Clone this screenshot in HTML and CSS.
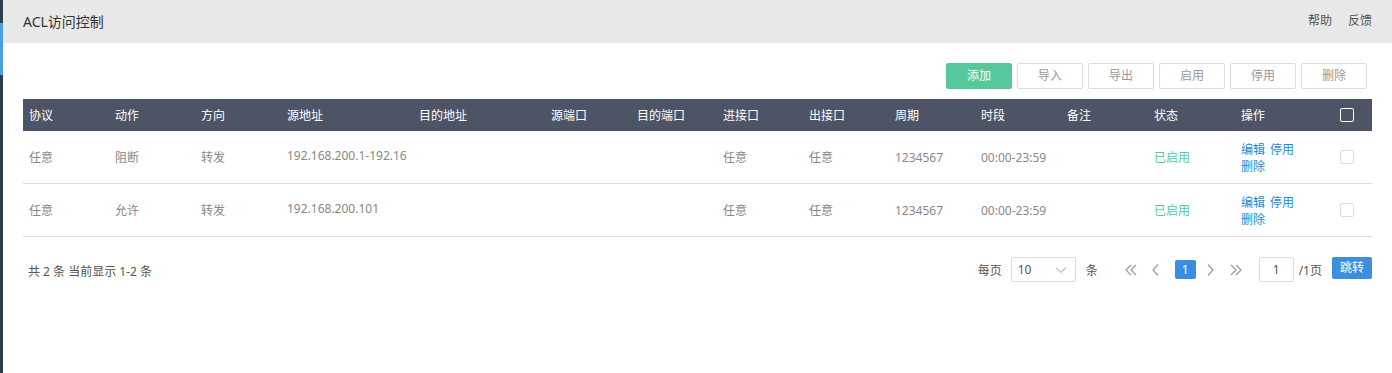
FILE: index.html
```html
<!DOCTYPE html>
<html lang="zh-CN">
<head>
  <meta charset="UTF-8" />
  <title>ACL访问控制</title>
  <link rel="stylesheet" href="styles.css">
</head>
<body>
  <div class="layout">
    <div class="side-strip"><div class="side-mark"></div></div>
    <div class="main">
      <div class="top-bar">
        <div class="page-title">ACL访问控制</div>
        <div class="top-links">
          <span>帮助</span>
          <span>反馈</span>
        </div>
      </div>

      <div class="content">
        <div class="toolbar">
          <div class="btn btn-green">添加</div>
          <div class="btn">导入</div>
          <div class="btn">导出</div>
          <div class="btn">启用</div>
          <div class="btn">停用</div>
          <div class="btn">删除</div>
        </div>

        <div class="acl-table">
          <div class="acl-row acl-head">
            <div class="cell">协议</div>
            <div class="cell">动作</div>
            <div class="cell">方向</div>
            <div class="cell">源地址</div>
            <div class="cell">目的地址</div>
            <div class="cell">源端口</div>
            <div class="cell">目的端口</div>
            <div class="cell">进接口</div>
            <div class="cell">出接口</div>
            <div class="cell">周期</div>
            <div class="cell">时段</div>
            <div class="cell">备注</div>
            <div class="cell">状态</div>
            <div class="cell">操作</div>
            <div class="cell cell-check"><span class="check check-head"></span></div>
          </div>

          <div class="acl-row">
            <div class="cell">任意</div>
            <div class="cell">阻断</div>
            <div class="cell">转发</div>
            <div class="cell cell-ip"><span class="ip-text">192.168.200.1-192.168.200.100</span></div>
            <div class="cell"></div>
            <div class="cell"></div>
            <div class="cell"></div>
            <div class="cell">任意</div>
            <div class="cell">任意</div>
            <div class="cell">1234567</div>
            <div class="cell">00:00-23:59</div>
            <div class="cell"></div>
            <div class="cell status-on">已启用</div>
            <div class="cell cell-ops"><a>编辑</a><a>停用</a><a>删除</a></div>
            <div class="cell cell-check"><span class="check"></span></div>
          </div>

          <div class="acl-row">
            <div class="cell">任意</div>
            <div class="cell">允许</div>
            <div class="cell">转发</div>
            <div class="cell cell-ip"><span class="ip-text">192.168.200.101</span></div>
            <div class="cell"></div>
            <div class="cell"></div>
            <div class="cell"></div>
            <div class="cell">任意</div>
            <div class="cell">任意</div>
            <div class="cell">1234567</div>
            <div class="cell">00:00-23:59</div>
            <div class="cell"></div>
            <div class="cell status-on">已启用</div>
            <div class="cell cell-ops"><a>编辑</a><a>停用</a><a>删除</a></div>
            <div class="cell cell-check"><span class="check"></span></div>
          </div>
        </div>

        <div class="footer">
          <div class="summary">共 2 条 当前显示 1-2 条</div>
          <div class="pager">
            <span class="pager-label">每页</span>
            <div class="page-size">
              <span>10</span>
              <svg width="12" height="8" viewBox="0 0 12 8"><polyline points="1,1.5 6,6.5 11,1.5" fill="none" stroke="#999" stroke-width="1"/></svg>
            </div>
            <span class="pager-label">条</span>
            <div class="pager-nav">
              <svg class="nav-icon nav-first" width="14" height="14" viewBox="0 0 14 14"><polyline points="7,2 2,7 7,12" fill="none" stroke="#999" stroke-width="1.2"/><polyline points="12,2 7,7 12,12" fill="none" stroke="#999" stroke-width="1.2"/></svg>
              <svg class="nav-icon nav-prev" width="14" height="14" viewBox="0 0 14 14"><polyline points="9,1.5 4,7 9,12.5" fill="none" stroke="#999" stroke-width="1.2"/></svg>
              <span class="page-num">1</span>
              <svg class="nav-icon nav-next" width="14" height="14" viewBox="0 0 14 14"><polyline points="5,1.5 10,7 5,12.5" fill="none" stroke="#999" stroke-width="1.2"/></svg>
              <svg class="nav-icon nav-last" width="14" height="14" viewBox="0 0 14 14"><polyline points="2,2 7,7 2,12" fill="none" stroke="#999" stroke-width="1.2"/><polyline points="7,2 12,7 7,12" fill="none" stroke="#999" stroke-width="1.2"/></svg>
            </div>
            <div class="page-input">1</div>
            <span class="pager-label">/1页</span>
            <div class="jump-btn">跳转</div>
          </div>
        </div>
      </div>
    </div>
  </div>
</body>
</html>
```

FILE: styles.css
```css
* { box-sizing: border-box; }
body {
  margin: 0;
  font-family: "Noto Sans", "Noto Sans CJK SC", sans-serif;
  font-size: 12px;
  color: #555;
  background: #fff;
}
.layout {
  display: flex;
  height: 373px;
}
.side-strip {
  width: 3px;
  background: #2f3e4e;
}
.side-mark {
  margin-top: 23px;
  height: 52px;
  background: #4a9fe0;
}
.main {
  flex: 1;
  display: flex;
  flex-direction: column;
}

.top-bar {
  height: 43px;
  background: #e8e8e8;
  display: flex;
  justify-content: space-between;
  align-items: center;
  padding: 0 20px;
}
.page-title {
  font-size: 14px;
  color: #333;
  padding-bottom: 2px;
}
.top-links {
  display: flex;
  gap: 16px;
  color: #555;
  padding-bottom: 4px;
}

.content {
  padding: 0 20px;
}

.toolbar {
  display: flex;
  justify-content: flex-end;
  gap: 5px;
  margin-top: 20px;
  margin-right: 5px;
}
.btn {
  width: 66px;
  height: 26px;
  line-height: 24px;
  text-align: center;
  border: 1px solid #ddd;
  border-radius: 2px;
  color: #999;
  background: #fff;
}
.btn-green {
  background: #55c99b;
  border-color: #55c99b;
  color: #fff;
}

.acl-table {
  margin-top: 10px;
}
.acl-row {
  display: grid;
  grid-template-columns: 86px 86px 86px 132px 132px 86px 86px 86px 86px 86px 86px 87px 87px 86px 51px;
  height: 53px;
  border-bottom: 1px solid #ddd;
  color: #888;
}
.acl-head {
  height: 32px;
  background: #4d5466;
  color: #fff;
  border-bottom: none;
}
.cell {
  display: flex;
  align-items: center;
  padding: 0 6px;
  white-space: nowrap;
  overflow: hidden;
}
.cell-ip {
  display: block;
  padding-top: 16px;
}
.ip-text {
  display: block;
  overflow: hidden;
}
.cell-ops {
  display: flex;
  flex-wrap: wrap;
  align-content: flex-start;
  column-gap: 5px;
  padding-top: 10px;
  line-height: 17px;
  padding-right: 10px;
}
.cell-ops a { color: #1e88d4; }
.status-on { color: #55c99b; }
.cell-check {
  justify-content: center;
  padding: 0;
}
.check {
  width: 14px;
  height: 14px;
  border: 1px solid #ddd;
  border-radius: 2px;
  background: #fff;
}
.check-head {
  background: transparent;
  border: 1.5px solid #fff;
}

.footer {
  display: flex;
  justify-content: space-between;
  align-items: center;
  margin-top: 20px;
}
.summary {
  padding-left: 5px;
  padding-top: 2px;
}
.pager {
  display: flex;
  align-items: center;
}
.pager-label { color: #555; }
.page-size {
  width: 65px;
  height: 25px;
  border: 1px solid #ddd;
  border-radius: 2px;
  display: flex;
  align-items: center;
  justify-content: space-between;
  padding: 0 8px 0 6px;
  margin: 0 10px 0 9px;
  color: #555;
}
.pager-nav {
  display: flex;
  align-items: center;
  margin: 0 16px 0 26px;
}
.nav-icon { display: block; }
.nav-prev { margin-left: 11px; margin-right: 12px; }
.nav-next { margin-left: 7px; margin-right: 12px; }
.page-num {
  width: 21px;
  height: 19px;
  line-height: 19px;
  text-align: center;
  background: #3a8ee0;
  color: #fff;
  border-radius: 2px;
}
.page-input {
  width: 35px;
  height: 25px;
  line-height: 23px;
  border: 1px solid #ddd;
  border-radius: 2px;
  text-align: center;
  color: #555;
  margin-right: 5px;
}
.jump-btn {
  width: 40px;
  height: 22px;
  line-height: 22px;
  text-align: center;
  background: #3d8fdc;
  color: #fff;
  border-radius: 2px;
  margin-left: 10px;
  margin-bottom: 3px;
}
```
